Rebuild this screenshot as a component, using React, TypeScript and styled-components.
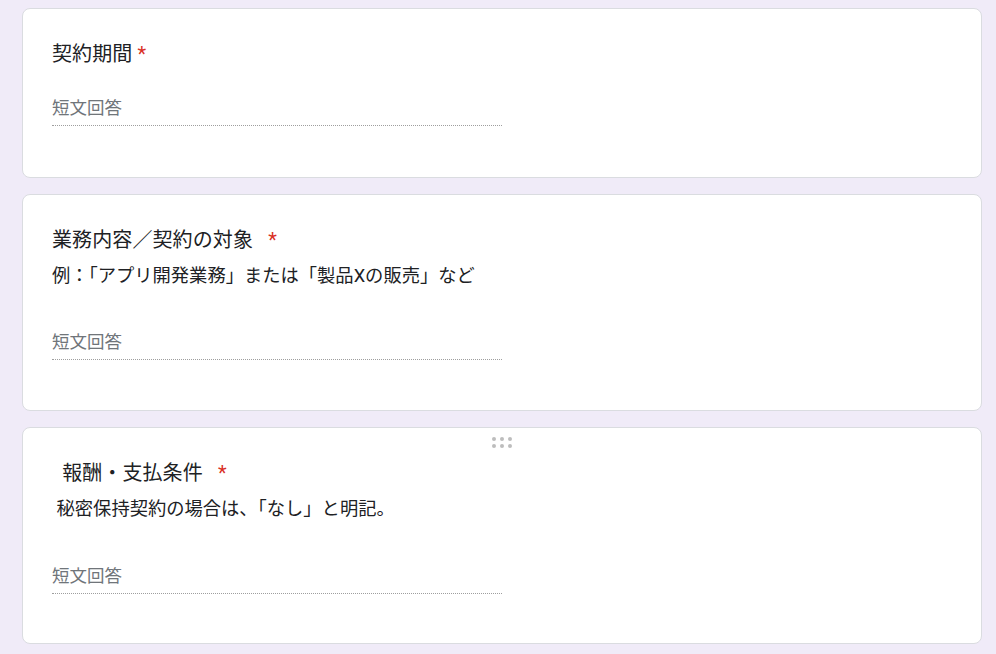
import React from "react";
import styled, { createGlobalStyle } from "styled-components";

const palette = {
  bg: "#f0ebf8",
  border: "#dadce0",
  text: "#202124",
  hint: "#70757a",
  red: "#d93025",
  dots: "#bdbdbd",
};

const GlobalStyle = createGlobalStyle`
  html, body {
    margin: 0;
    padding: 0;
    background: ${palette.bg};
  }
  body {
    font-family: Roboto, "Noto Sans CJK JP", sans-serif;
    color: ${palette.text};
  }
`;

const Page = styled.div`
  min-height: 100vh;
  box-sizing: border-box;
  padding: 8px 0 0 22px;
  display: flex;
  flex-direction: column;
  gap: 16px;
`;

const Card = styled.div<{ $height: number }>`
  position: relative;
  box-sizing: border-box;
  width: 960px;
  height: ${(p) => p.$height}px;
  background: #fff;
  border: 1px solid ${palette.border};
  border-radius: 8px;
  padding: 30px 30px 0 29px;
  display: flex;
  flex-direction: column;
`;

const DragHandle = styled.div`
  position: absolute;
  top: 9px;
  left: 50%;
  transform: translateX(-50%);
  display: grid;
  grid-template-columns: repeat(3, 4px);
  grid-auto-rows: 4px;
  column-gap: 4px;
  row-gap: 3px;

  span {
    width: 4px;
    height: 4px;
    border-radius: 50%;
    background: ${palette.dots};
  }
`;

const Title = styled.div`
  font-size: 20px;
  line-height: 30px;
  letter-spacing: 0.1px;
  white-space: pre-wrap;
`;

const Required = styled.span`
  color: ${palette.red};
`;

const Description = styled.div`
  margin-top: 8px;
  font-size: 18.3px;
  line-height: 25px;
  white-space: pre-wrap;
`;

const Answer = styled.div<{ $gap: number }>`
  margin-top: ${(p) => p.$gap}px;
  width: 450px;
  padding-bottom: 4px;
  border-bottom: 1px dotted #9e9e9e;
  font-size: 17.5px;
  line-height: 25px;
  color: ${palette.hint};
`;

interface Question {
  title: string;
  description?: string;
  height: number;
  gap: number;
  handle?: boolean;
}

const questions: Question[] = [
  { title: "契約期間", height: 170, gap: 27 },
  {
    title: "業務内容／契約の対象  ",
    description: "例：「アプリ開発業務」または「製品Xの販売」など",
    height: 217,
    gap: 42,
  },
  {
    title: "  報酬・支払条件  ",
    description: " 秘密保持契約の場合は、「なし」と明記。",
    height: 217,
    gap: 43,
    handle: true,
  },
];

const App: React.FC = () => {
  return (
    <>
      <GlobalStyle />
      <Page>
        {questions.map((q, i) => (
          <Card key={i} $height={q.height}>
            {q.handle && (
              <DragHandle>
                {Array.from({ length: 6 }).map((_, d) => (
                  <span key={d} />
                ))}
              </DragHandle>
            )}
            <Title>
              {q.title}
              <Required> *</Required>
            </Title>
            {q.description && <Description>{q.description}</Description>}
            <Answer $gap={q.gap}>短文回答</Answer>
          </Card>
        ))}
      </Page>
    </>
  );
};

export default App;
